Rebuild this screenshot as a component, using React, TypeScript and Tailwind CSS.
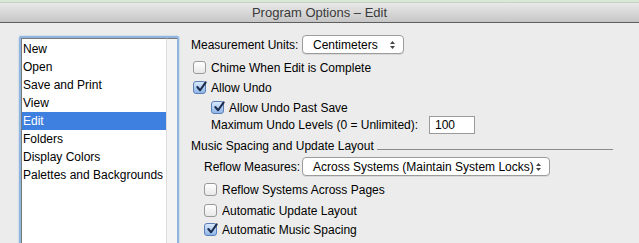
import React from "react";

const font = { fontFamily: '"Liberation Sans", Arial, sans-serif' };

function Check({ checked }: { checked?: boolean }) {
  return checked ? (
    <div className="relative w-[13px] h-[13px] rounded-[3px] border border-[#5a7fb5] bg-gradient-to-b from-[#d9e8fb] to-[#8fb6e9] shrink-0">
      <svg viewBox="0 0 14 14" className="absolute left-[1px] top-[-2px] w-[13px] h-[13px]">
        <path d="M2.5 7.5 L5.5 11 L11.5 2.5" fill="none" stroke="#1c2c4c" strokeWidth="2.2" strokeLinecap="round" strokeLinejoin="round" />
      </svg>
    </div>
  ) : (
    <div className="w-[13px] h-[13px] rounded-[3px] border border-[#9a9a9a] bg-gradient-to-b from-[#ffffff] to-[#e8e8e8] shrink-0" />
  );
}

function Popup({ label, width }: { label: string; width: string }) {
  return (
    <div className={`${width} h-[19px] rounded-[4px] border border-[#9c9c9c] bg-white flex items-center justify-between pl-[10px] pr-[7px] shadow-[0_1px_0_rgba(0,0,0,0.08)]`}>
      <span className="text-[12px] text-black leading-none whitespace-nowrap">{label}</span>
      <svg width="7" height="10" viewBox="0 0 7 10">
        <path d="M3.5 1 L6 4 L1 4 Z" fill="#444" />
        <path d="M3.5 9 L6 6 L1 6 Z" fill="#444" />
      </svg>
    </div>
  );
}

const items = ["New", "Open", "Save and Print", "View", "Edit", "Folders", "Display Colors", "Palettes and Backgrounds"];

export default function App() {
  return (
    <div style={font} className="w-[639px] h-[243px] overflow-hidden bg-[#ececec] flex flex-col text-black whitespace-nowrap">
      <div className="h-[3px] bg-[#d9e8d7] border-b border-[#c4d3c2] shrink-0" />
      <div className="h-[20px] shrink-0 bg-gradient-to-b from-[#e9e9e9] to-[#c6c6c6] border-b border-[#5e5e5e] flex items-center justify-center">
        <span className="text-[13px] text-[#3a3a3a] leading-none">Program Options – Edit</span>
      </div>
      <div className="flex flex-1 min-h-0">
        <div className="pl-[19px] pt-[13px] w-[191px] shrink-0">
          <div className="h-[240px] w-[160px] rounded-[2px] border-[2px] border-[#8fb4dd] shadow-[0_0_2px_#9cc0e8] bg-white flex">
            <div className="flex-1 flex flex-col pt-[1px] border-l border-t border-[#7a7a7a]">
              {items.map((it) => (
                <div
                  key={it}
                  className={`h-[18px] flex items-center pl-[1px] text-[12px] leading-none ${it === "Edit" ? "bg-[#3d80df] text-white" : ""}`}
                >
                  {it}
                </div>
              ))}
            </div>
            <div className="w-[11px] bg-[#f4f4f4] border-l border-[#dcdcdc] border-t border-t-[#7a7a7a]" />
          </div>
        </div>
        <div className="flex flex-col pt-[12px] text-[12px] leading-none flex-1 pr-[26px]">
          <div className="flex items-center h-[19px]">
            <span className="w-[111px]">Measurement Units:</span>
            <Popup label="Centimeters" width="w-[102px]" />
          </div>
          <div className="flex items-center h-[13px] mt-[7px] pl-[2px] gap-[5px]">
            <Check />
            <span>Chime When Edit is Complete</span>
          </div>
          <div className="flex items-center h-[13px] mt-[7px] pl-[2px] gap-[5px]">
            <Check checked />
            <span>Allow Undo</span>
          </div>
          <div className="flex items-center h-[13px] mt-[7px] pl-[20px] gap-[5px]">
            <Check checked />
            <span>Allow Undo Past Save</span>
          </div>
          <div className="flex items-center h-[18px] mt-[2px] pl-[20px]">
            <span className="w-[218px]">Maximum Undo Levels (0 = Unlimited):</span>
            <div className="w-[46px] h-[18px] border border-[#9a9a9a] bg-white flex items-center pl-[5px]">100</div>
          </div>
          <div className="flex items-center h-[14px] mt-[5px]">
            <span>Music Spacing and Update Layout</span>
            <div className="flex-1 h-px bg-[#8a8a8a] ml-[3px] mt-[6px]" />
          </div>
          <div className="flex items-center h-[19px] mt-[4px] pl-[13px]">
            <span className="w-[98px]">Reflow Measures:</span>
            <Popup label="Across Systems (Maintain System Locks)" width="w-[248px]" />
          </div>
          <div className="flex items-center h-[13px] mt-[7px] pl-[13px] gap-[5px]">
            <Check />
            <span>Reflow Systems Across Pages</span>
          </div>
          <div className="flex items-center h-[13px] mt-[8px] pl-[13px] gap-[5px]">
            <Check />
            <span>Automatic Update Layout</span>
          </div>
          <div className="flex items-center h-[13px] mt-[6px] pl-[13px] gap-[5px]">
            <Check checked />
            <span>Automatic Music Spacing</span>
          </div>
        </div>
      </div>
    </div>
  );
}
